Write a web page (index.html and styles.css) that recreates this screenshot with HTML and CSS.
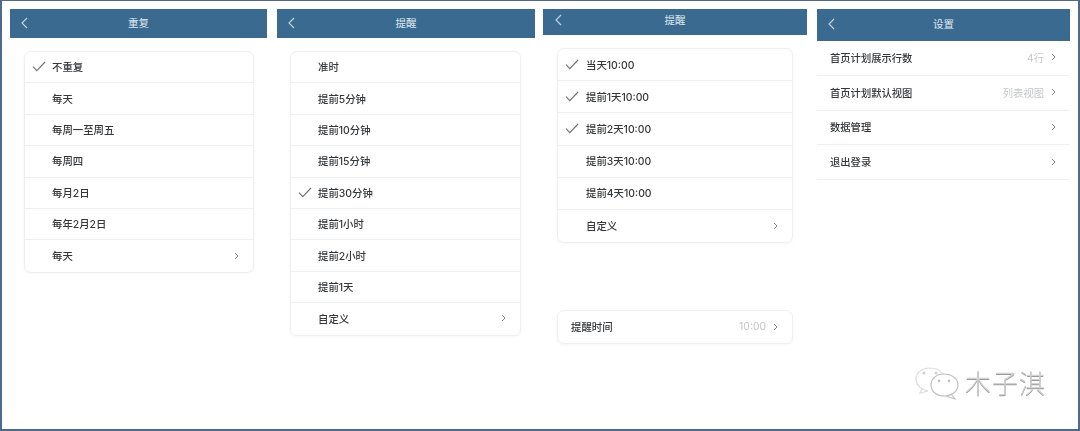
FILE: index.html
```html
<!DOCTYPE html>
<html lang="zh">
<head>
<meta charset="utf-8">
<title>设置</title>
<link rel="stylesheet" href="styles.css">
</head>
<body>
<svg class="defs" width="0" height="0" aria-hidden="true">
  <symbol id="check" viewBox="0 0 14 11"><path d="M1 5.6 L4.8 9.6 L13 1" fill="none" stroke="#6d7278" stroke-width="1.1"/></symbol>
  <symbol id="chev" viewBox="0 0 5 8"><path d="M1 1 L4 4 L1 7" fill="none" stroke="#85888c" stroke-width="1"/></symbol>
  <symbol id="back" viewBox="0 0 7 12"><path d="M6 1 L1 6 L6 11" fill="none" stroke="#c3d6e4" stroke-width="1.1"/></symbol>
</svg>
<main class="frame">
  <section class="panel panel-a">
    <header class="bar bar-a"><svg class="back"><use href="#back"/></svg><h1>重复</h1></header>
    <div class="card card-a">
      <div class="row"><svg class="check"><use href="#check"/></svg><span>不重复</span></div>
      <div class="row"><span>每天</span></div>
      <div class="row"><span>每周一至周五</span></div>
      <div class="row"><span>每周四</span></div>
      <div class="row"><span>每月2日</span></div>
      <div class="row"><span>每年2月2日</span></div>
      <div class="row"><span>每天</span><svg class="chev"><use href="#chev"/></svg></div>
    </div>
  </section>
  <section class="panel panel-b">
    <header class="bar bar-a"><svg class="back"><use href="#back"/></svg><h1>提醒</h1></header>
    <div class="card card-b">
      <div class="row"><span>准时</span></div>
      <div class="row"><span>提前5分钟</span></div>
      <div class="row"><span>提前10分钟</span></div>
      <div class="row"><span>提前15分钟</span></div>
      <div class="row"><svg class="check"><use href="#check"/></svg><span>提前30分钟</span></div>
      <div class="row"><span>提前1小时</span></div>
      <div class="row"><span>提前2小时</span></div>
      <div class="row"><span>提前1天</span></div>
      <div class="row"><span>自定义</span><svg class="chev"><use href="#chev"/></svg></div>
    </div>
  </section>
  <section class="panel panel-c">
    <header class="bar bar-c"><svg class="back"><use href="#back"/></svg><h1>提醒</h1></header>
    <div class="card card-c">
      <div class="row"><svg class="check"><use href="#check"/></svg><span>当天10:00</span></div>
      <div class="row"><svg class="check"><use href="#check"/></svg><span>提前1天10:00</span></div>
      <div class="row"><svg class="check"><use href="#check"/></svg><span>提前2天10:00</span></div>
      <div class="row"><span>提前3天10:00</span></div>
      <div class="row"><span>提前4天10:00</span></div>
      <div class="row"><span>自定义</span><svg class="chev"><use href="#chev"/></svg></div>
    </div>
    <div class="card card-time">
      <div class="row"><span>提醒时间</span><em>10:00</em><svg class="chev"><use href="#chev"/></svg></div>
    </div>
  </section>
  <section class="panel panel-d">
    <header class="bar bar-d"><svg class="back"><use href="#back"/></svg><h1>设置</h1></header>
    <div class="list">
      <div class="row"><span>首页计划展示行数</span><em>4行</em><svg class="chev"><use href="#chev"/></svg></div>
      <div class="row"><span>首页计划默认视图</span><em>列表视图</em><svg class="chev"><use href="#chev"/></svg></div>
      <div class="row"><span>数据管理</span><svg class="chev"><use href="#chev"/></svg></div>
      <div class="row"><span>退出登录</span><svg class="chev"><use href="#chev"/></svg></div>
    </div>
  </section>
  <aside class="mark">
    <svg class="mark-icon" viewBox="0 0 44 34">
      <path d="M13 24 C6 23 1 18 1 12 C1 5 8 1 14 1 C20 1 25 3 28 7" fill="none" stroke="#dcdcdc" stroke-width="1.2"/>
      <path d="M7 22 L5 26 L13 24" fill="none" stroke="#dcdcdc" stroke-width="1.2"/>
      <path d="M29 7 C37 7 43 12 43 18 C43 24 37 29 29 29 C21 29 16 24 16 18 C16 12 21 7 29 7 Z" fill="none" stroke="#bdbdbd" stroke-width="1.1"/>
      <path d="M36 27 L40 32 L31 29" fill="none" stroke="#bdbdbd" stroke-width="1.1"/>
      <circle cx="9" cy="6" r="1.5" fill="#cfcfcf"/><circle cx="21" cy="6" r="1.5" fill="#cfcfcf"/>
      <circle cx="24" cy="14" r="1.4" fill="#c4c4c4"/><circle cx="34" cy="14" r="1.4" fill="#c4c4c4"/>
    </svg>
    <span>木子淇</span>
  </aside>
</main>
</body>
</html>
```
FILE: styles.css
```css
* { box-sizing: border-box; margin: 0; padding: 0; }
html, body { width: 1080px; height: 431px; overflow: hidden; background: #fff; }
body { font-family: Inter, "Noto Sans CJK SC", "Noto Sans", sans-serif; color: #35383b; }
.defs { position: absolute; }
.frame {
  position: relative;
  display: flex;
  width: 1080px;
  height: 431px;
  padding: 8px 8px 0 8px;
  border: solid #4d6a8c;
  border-width: 1px 2px 2px 2px;
  filter: blur(0.35px);
}
.panel { display: flex; flex-direction: column; flex: none; }
.panel-a { width: 257px; }
.panel-b { width: 258px; margin-left: 10px; }
.panel-c { width: 264px; margin-left: 8px; }
.panel-d { width: 253px; margin-left: 10px; }

.bar {
  display: flex;
  align-items: center;
  justify-content: center;
  position: relative;
  background: #3b6a90;
  flex: none;
  padding-bottom: 3px;
}
.bar-a { height: 29px; }
.bar-c { height: 26px; padding-bottom: 5px; }
.bar-d { height: 32px; }
.bar h1 { font-size: 10.5px; font-weight: 400; color: #dfe9f0; }
.back { position: absolute; left: 11px; top: 50%; width: 7px; height: 12px; margin-top: -7px; }
.bar-c .back { top: 11px; left: 12px; margin-top: -6px; }
.bar-d .back { left: 11px; }

.card {
  background: #fff;
  border: 1px solid #eeeff1;
  border-radius: 7px;
  box-shadow: 0 1px 3px rgba(60, 70, 80, 0.05);
}
.card-a { margin: 13px 13px 0 14px; }
.card-b { margin: 13px 14px 0 13px; }
.card-c { margin: 13px 14px 0 14px; }
.card-time { margin: 67px 14px 0 14px; }

.row {
  position: relative;
  display: flex;
  align-items: center;
  height: 31.4px;
  padding: 0 14px 1px 27px;
  font-size: 10.4px;
  font-weight: 500;
  border-bottom: 1px solid #eeeff1;
}
.row:last-child { border-bottom: 0; }
.row span { flex: 1; }
.row em { font-style: normal; font-weight: 400; color: #c5c7ca; margin-right: 7px; }
.card-c .row { height: 32.2px; padding-left: 28px; }
.card-time .row { height: 32px; padding-left: 13px; }

.check { position: absolute; left: 7px; top: 50%; width: 14px; height: 11px; margin-top: -6px; }
.chev { flex: none; width: 5px; height: 8px; }

.list .row { height: 34.8px; padding: 0 14px 1px 13px; font-size: 10.3px; }
.list .row:last-child { border-bottom: 1px solid #eeeff1; }

.mark {
  position: absolute;
  left: 913px;
  top: 366px;
  display: flex;
  align-items: center;
  gap: 6px;
  color: #d2d2d2;
  text-shadow: 0 1px 0 #9a9a9a;
}
.mark-icon { width: 44px; height: 34px; flex: none; }
.mark span { font-size: 26px; line-height: 30px; font-weight: 300; letter-spacing: 1px; }
```
